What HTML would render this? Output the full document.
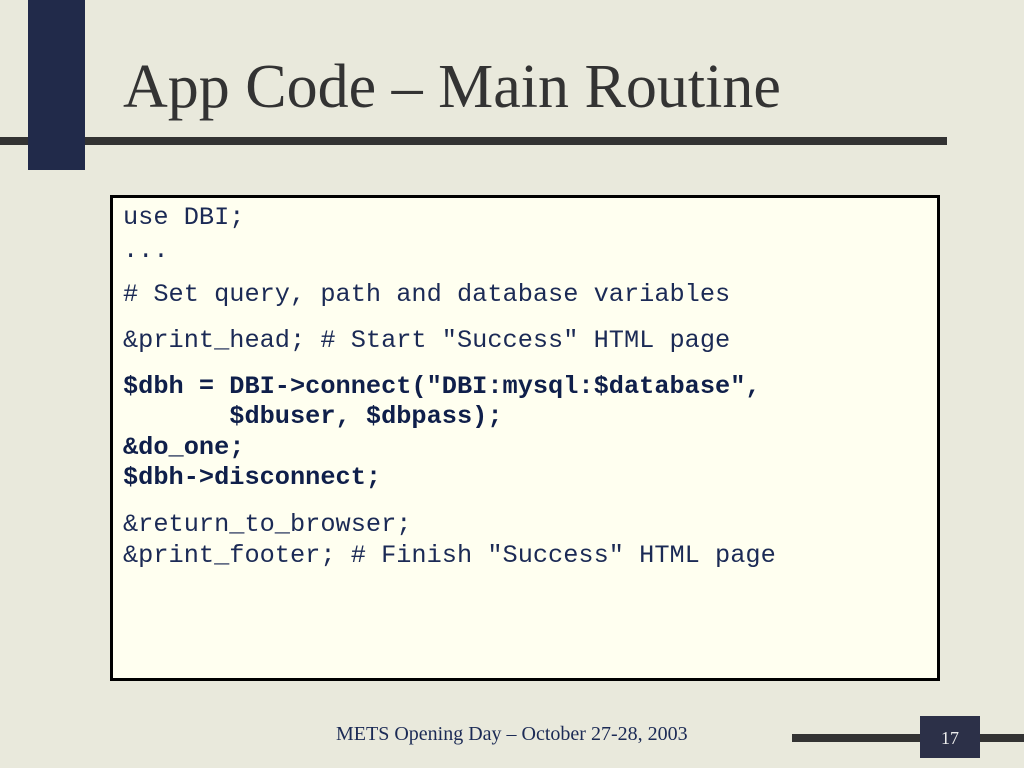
<!DOCTYPE html>
<html><head><style>
body{margin:0;width:1024px;height:768px;overflow:hidden;background:#e9e9dc;position:relative;font-family:"Liberation Serif",serif}
.a{position:absolute}
.c{position:absolute;left:123px;font-family:"Liberation Mono",monospace;font-size:25.3px;color:#1b2a55;white-space:pre;line-height:28px}
.b{font-weight:bold;color:#0f1f4a}
</style></head><body>
<div class="a" style="left:0;top:137px;width:947px;height:8px;background:#333"></div>
<div class="a" style="left:28px;top:0;width:57px;height:170px;background:#212a4a"></div>
<div class="a" style="left:123px;top:52px;font-size:62px;color:#333;white-space:nowrap">App Code – Main Routine</div>
<div class="a" style="left:110px;top:195px;width:824px;height:480px;border:3px solid #000;background:#fffff0"></div>
<div class="c" style="top:204px">use DBI;</div>
<div class="c" style="top:237px">...</div>
<div class="c" style="top:281px"># Set query, path and database variables</div>
<div class="c" style="top:327px">&amp;print_head; # Start "Success" HTML page</div>
<div class="c b" style="top:373px">$dbh = DBI-&gt;connect("DBI:mysql:$database",</div>
<div class="c b" style="top:403px">       $dbuser, $dbpass);</div>
<div class="c b" style="top:434px">&amp;do_one;</div>
<div class="c b" style="top:464px">$dbh-&gt;disconnect;</div>
<div class="c" style="top:511px">&amp;return_to_browser;</div>
<div class="c" style="top:542px">&amp;print_footer; # Finish "Success" HTML page</div>
<div class="a" style="left:336px;top:723px;font-size:20px;color:#1b2a55;white-space:nowrap">METS Opening Day – October 27-28, 2003</div>
<div class="a" style="left:792px;top:734px;width:232px;height:8px;background:#333"></div>
<div class="a" style="left:920px;top:716px;width:60px;height:42px;background:#2c3048;color:#eee;font-size:18px;text-align:center;line-height:44px">17</div>
</body></html>
